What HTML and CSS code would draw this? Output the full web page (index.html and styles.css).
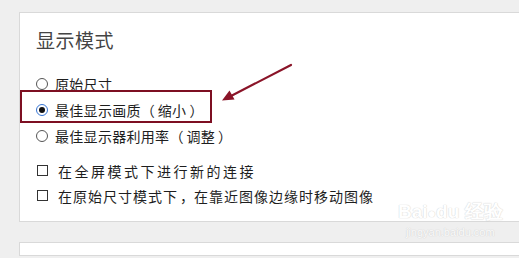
FILE: index.html
```html
<!DOCTYPE html>
<html lang="zh">
<head>
<meta charset="utf-8">
<link rel="stylesheet" href="styles.css">
</head>
<body>
<div class="page">
  <section class="card">
    <h2 class="title">显示模式</h2>
    <div class="group">
      <div class="row"><span class="radio"></span><span class="label">原始尺寸</span></div>
      <div class="row"><span class="radio checked"></span><span class="label">最佳显示画质<span class="po">（</span>缩小<span class="pc">）</span></span></div>
      <div class="row"><span class="radio"></span><span class="label">最佳显示器利用率<span class="po">（</span>调整<span class="pc">）</span></span></div>
    </div>
    <div class="group checks">
      <div class="row crow"><span class="check"></span><span class="label wide">在全屏模式下进行新的连接</span></div>
      <div class="row crow"><span class="check"></span><span class="label mid">在原始尺寸模式下<span class="comma">，</span>在靠近图像边缘时移动图像</span></div>
    </div>
    <div class="highlight"></div>
  </section>
  <section class="card card2"></section>
  <svg class="arrow" width="519" height="258" viewBox="0 0 519 258">
    <line x1="291" y1="65" x2="231" y2="96" stroke="#8a1428" stroke-width="2.2" stroke-linecap="round"/>
    <polygon points="222,100.5 229.5,90.5 234.5,99.5" fill="#8a1428"/>
  </svg>
  <div class="watermark">
    <div class="wm-top">Bai<span class="paw">●</span>du 经验</div>
    <div class="wm-url">jingyan.baidu.com</div>
  </div>
</div>
</body>
</html>
```

FILE: styles.css
```css
html, body {
  margin: 0;
  padding: 0;
  background: #efefef;
  width: 519px;
  height: 258px;
  overflow: hidden;
}

.page {
  position: relative;
  height: 258px;
  padding: 12px 0 0 19px;
  box-sizing: border-box;
  font-family: "Noto Sans CJK SC", "Noto Sans", sans-serif;
}

.card {
  position: relative;
  background: #ffffff;
  border: 1px solid #d9d9d9;
  border-right: none;
  height: 208px;
  box-sizing: content-box;
  padding: 0 0 0 16px;
}

.card2 {
  margin-top: 20px;
  height: 12px;
}

.title {
  margin: 15px 0 0 0;
  font-size: 19px;
  line-height: 24px;
  font-weight: normal;
  color: #444444;
  letter-spacing: 0.5px;
}

.group {
  margin-top: 19px;
  display: flex;
  flex-direction: column;
}

.checks {
  margin-top: 9px;
}

.row {
  display: flex;
  align-items: center;
  height: 26px;
  font-size: 14px;
  color: #1e1e1e;
}

.crow {
  height: 25px;
}

.radio {
  width: 10px;
  height: 10px;
  border: 1px solid #555555;
  border-radius: 50%;
  margin-right: 7px;
  display: flex;
  align-items: center;
  justify-content: center;
  flex: none;
}

.radio.checked {
  border-color: #3574d4;
  box-shadow: inset 0 0 0 1px #ffffff;
}

.radio.checked::after {
  content: "";
  width: 6px;
  height: 6px;
  border-radius: 50%;
  background: #111111;
}

.check {
  width: 9px;
  height: 9px;
  border: 1px solid #333333;
  margin: 0 10px 0 1px;
  flex: none;
}

.label {
  line-height: 20px;
  letter-spacing: 0.3px;
  white-space: nowrap;
}

.label.wide {
  letter-spacing: 2.5px;
}

.label.mid {
  letter-spacing: 1px;
}

.po {
  letter-spacing: 0;
  margin-right: 3px;
}

.pc {
  letter-spacing: 0;
  margin-left: 3px;
}

.comma {
  letter-spacing: 0;
  margin-left: 2px;
}

.highlight {
  position: absolute;
  left: 0;
  top: 77px;
  width: 188px;
  height: 29px;
  border: 2px solid #7d0f22;
}

.arrow {
  position: absolute;
  left: 0;
  top: 0;
}

.watermark {
  position: absolute;
  left: 398px;
  top: 200px;
  color: #ffffff;
  text-shadow: 0 0 1px #c8c8c8, 0 0 1px #c8c8c8;
  opacity: 0.75;
  font-family: "Liberation Sans", sans-serif;
  text-align: center;
}

.wm-top {
  font-size: 19px;
  font-weight: bold;
  line-height: 24px;
}

.paw {
  font-size: 14px;
}

.wm-url {
  font-size: 11px;
  line-height: 14px;
}
```
